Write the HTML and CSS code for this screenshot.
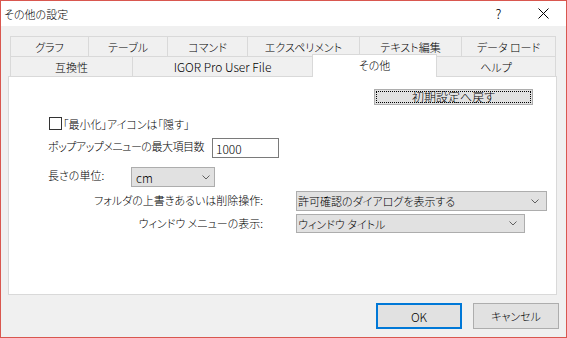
FILE: index.html
```html
<!DOCTYPE html>
<html lang="ja">
<head>
    <meta charset="UTF-8">
    <title>その他の設定</title>
    <link rel="stylesheet" href="styles.css">
</head>
<body>
    <div class="window">
        <!-- Title bar -->
        <div class="titlebar">
            <span class="title">その他の設定</span>
            <span class="caption-btn">?</span>
            <span class="caption-btn">
                <svg width="11" height="11" viewBox="0 0 11 11"><path d="M0.5 0.5 L10.5 10.5 M10.5 0.5 L0.5 10.5" stroke="#000" stroke-width="1" fill="none"/></svg>
            </span>
        </div>

        <div class="dialog">
            <!-- Two rows of tabs -->
            <div class="tabs">
                <div class="tab-row row-top">
                    <div class="tab">グラフ</div>
                    <div class="tab">テーブル</div>
                    <div class="tab">コマンド</div>
                    <div class="tab">エクスペリメント</div>
                    <div class="tab">テキスト編集</div>
                    <div class="tab">データ ロード</div>
                </div>
                <div class="tab-row row-bottom">
                    <div class="tab">互換性</div>
                    <div class="tab latin">IGOR Pro User File</div>
                    <div class="tab active">その他</div>
                    <div class="tab">ヘルプ</div>
                </div>
            </div>

            <!-- Tab page -->
            <div class="panel">
                <div class="reset-row">
                    <button class="btn reset">初期設定へ戻す</button>
                </div>

                <div class="check-row">
                    <span class="checkbox"></span>
                    <span>「最小化」アイコンは「隠す」</span>
                </div>

                <div class="field-row popup-row">
                    <span class="label popup-label">ポップアップメニューの最大項目数</span>
                    <span class="textbox">1000</span>
                </div>

                <div class="field-row unit-row">
                    <span class="label unit-label">長さの単位:</span>
                    <span class="select select-unit">
                        <span>cm</span>
                        <svg width="8" height="5" viewBox="0 0 8 5"><path d="M0.5 0.5 L4 4 L7.5 0.5" stroke="#606060" fill="none"/></svg>
                    </span>
                </div>

                <div class="field-row wide-row">
                    <span class="label right-label">フォルダの上書きあるいは削除操作:</span>
                    <span class="select select-folder">
                        <span>許可確認のダイアログを表示する</span>
                        <svg width="8" height="5" viewBox="0 0 8 5"><path d="M0.5 0.5 L4 4 L7.5 0.5" stroke="#606060" fill="none"/></svg>
                    </span>
                </div>

                <div class="field-row wide-row window-row">
                    <span class="label right-label">ウィンドウ メニューの表示:</span>
                    <span class="select select-window">
                        <span>ウィンドウ タイトル</span>
                        <svg width="8" height="5" viewBox="0 0 8 5"><path d="M0.5 0.5 L4 4 L7.5 0.5" stroke="#606060" fill="none"/></svg>
                    </span>
                </div>
            </div>

            <!-- OK / Cancel -->
            <div class="footer">
                <button class="btn ok">OK</button>
                <button class="btn cancel">キャンセル</button>
            </div>
        </div>
    </div>
</body>
</html>
```

FILE: styles.css
```css
* {
    box-sizing: border-box;
}

body {
    margin: 0;
    font-family: "Noto Sans CJK JP", sans-serif;
    font-size: 11px;
    font-weight: 300;
    font-feature-settings: "palt";
    color: #000;
    background: #f0f0f0;
}

.window {
    width: 567px;
    height: 338px;
    border: 1px solid #d9574f;
    background: #f0f0f0;
    display: flex;
    flex-direction: column;
}

/* Title bar */
.titlebar {
    height: 25px;
    background: #fff;
    display: flex;
    align-items: center;
}

.title {
    flex: 1;
    padding-left: 3px;
}

.caption-btn {
    width: 45px;
    height: 25px;
    display: flex;
    justify-content: center;
    align-items: center;
    font-size: 13px;
}

/* Dialog body */
.dialog {
    padding: 10px 9px 0 7px;
}

.tabs {
    margin-left: 2px;
}

.tab-row {
    display: grid;
    height: 20px;
}

.row-top {
    grid-template-columns: 78px 79px 80px 112px 102px 95px;
}

.row-bottom {
    grid-template-columns: 122px 180px 125px 119px;
}

.tab {
    height: 20px;
    border-top: 1px solid #d9d9d9;
    border-left: 1px solid #d9d9d9;
    background: #f0f0f0;
    display: flex;
    justify-content: center;
    align-items: center;
    white-space: nowrap;
}

.tab:last-child {
    border-right: 1px solid #d9d9d9;
}

.tab.active {
    position: relative;
    z-index: 1;
    height: 23px;
    margin-top: -2px;
    border-right: 1px solid #d9d9d9;
    background: #fff;
    padding-bottom: 3px;
}

.tab.active + .tab {
    border-left: none;
}

.latin {
    font-size: 12px;
}

/* Tab page */
.panel {
    height: 219px;
    background: #fff;
    border: 1px solid #d9d9d9;
    padding-top: 12px;
}

.reset-row {
    display: flex;
    justify-content: flex-end;
    padding-right: 23px;
}

.btn {
    font-family: inherit;
    font-size: 11px;
    font-weight: inherit;
    font-feature-settings: "palt";
    background: #e1e1e1;
    border: 1px solid #adadad;
    padding: 0;
    color: #000;
}

.reset {
    width: 159px;
    height: 16px;
    line-height: 12px;
    font-size: 12px;
    outline: 1px dotted #000;
    outline-offset: -3px;
}

.check-row {
    display: flex;
    align-items: center;
    gap: 1px;
    height: 13px;
    margin-top: 12px;
    padding-left: 40px;
}

.checkbox {
    width: 13px;
    height: 13px;
    border: 1px solid #333;
    background: #fff;
}

.field-row {
    display: flex;
    align-items: center;
    padding-left: 39px;
    height: 20px;
}

.label {
    white-space: nowrap;
}

.popup-row {
    margin-top: 8px;
}

.popup-label {
    width: 164px;
    padding-bottom: 4px;
    letter-spacing: -0.5px;
}

.textbox {
    width: 67px;
    height: 20px;
    border: 1px solid #7a7a7a;
    background: #fff;
    padding-left: 3px;
    display: flex;
    align-items: center;
    font-size: 12px;
}

.unit-row {
    margin-top: 9px;
}

.unit-label {
    width: 83px;
    padding-bottom: 4px;
}

.select {
    height: 20px;
    background: #e1e1e1;
    border: 1px solid #adadad;
    display: flex;
    align-items: center;
    justify-content: space-between;
    padding: 0 7px 0 1px;
    white-space: nowrap;
}

.select-unit {
    width: 84px;
    padding-left: 4px;
    padding-right: 4px;
    font-size: 12px;
}

.select-folder {
    width: 251px;
}

.select-window {
    width: 229px;
    height: 19px;
}

.wide-row {
    margin-top: 4px;
}

.window-row {
    margin-top: 3px;
    height: 19px;
}

.right-label {
    width: 248px;
    padding-right: 33px;
    text-align: right;
    padding-bottom: 2px;
}

/* Footer buttons */
.footer {
    display: flex;
    justify-content: flex-end;
    gap: 11px;
    margin-top: 8px;
    margin-right: -2px;
}

.ok, .cancel {
    width: 86px;
    height: 26px;
}

.ok {
    border: 2px solid #0078d7;
    font-size: 12px;
}
```
